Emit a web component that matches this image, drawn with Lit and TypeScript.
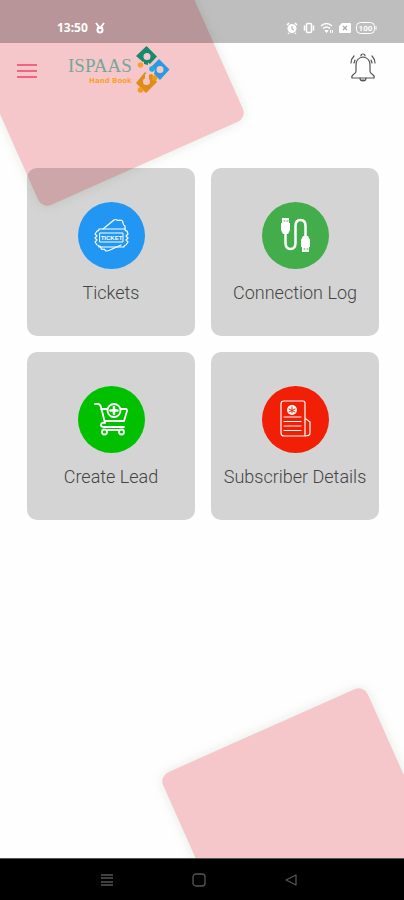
import { LitElement, html, css, svg } from "lit";
import { customElement, property } from "lit/decorators.js";

const icons: Record<string, unknown> = {
  ticket: svg`
    <path d="M12 14 23 5q2-1 3 0t3 0q3 0 3 3 0 2 2 3v3M8 31q2 0 2 2t3 1l2 2q2 0 4-1l11-5" />
    <path d="M8 14h26q0 2 2 2l1 3-2 2 2 2-2 2 2 2-2 3q-2 0-2 2H8q0-2-2-2l-2-3 2-2-2-2 2-2-2-2 2-3q2 0 2-2z" />
    <path d="M9 18h23v9H9z" stroke-width="1" />
    <text x="20.500" y="25" text-anchor="middle">TICKET</text>`,
  cable: svg`
    <path d="M10.500 17v11q0 6 5 6t5-6V11q0-6 5-6t5 6v10" stroke-width="2.500" />
    <path d="M7 3h7v5h1v7l-2 4H8l-2-4V8h1zM27 37h7v-5h1v-7l-2-4h-5l-2 4v7h1z" fill="#fff" stroke="none" />
    <path d="M9 6h1m2 0h1M29 34h1m2 0h1" stroke="#43ad4b" stroke-width="1" />`,
  cart: svg`
    <path d="M4 5h3q2 0 3 3l4 16q-4-1-4 2 0 2 3 2h20M10 10h6M30 10h5q1 0 1 2l-3 10H14" stroke-width="1.800" />
    <circle cx="23" cy="11.500" r="6.500" stroke-width="1.800" />
    <path d="M23 8v7m-3.500-3.500h7" stroke-width="2.500" />
    <circle cx="13.500" cy="33" r="2.500" stroke-width="1.800" /><circle cx="30.500" cy="33" r="2.500" stroke-width="1.800" />
    <path d="M17 31h10" stroke-width="2" />`,
  details: svg`
    <path d="M30 37H9q-3 0-3-3V5q0-3 3-3h19q2 0 2 2v33q5 0 5-3V23l-4-3" />
    <circle cx="17" cy="11" r="5" fill="#fff" stroke="none" />
    <path d="M17 8v6m-3-4 6 3m0-3-6 3" stroke="#f11f05" stroke-width="1" />
    <path d="M9 18h17M9 22.500h17M9 27h17M9 31.500h17" />`,
};

@customElement("menu-card")
class MenuCard extends LitElement {
  @property() icon = "";
  @property() label = "";

  static styles = css`
    :host { display: block; }
    .card {
      width: 100%;
      aspect-ratio: 1;
      box-sizing: border-box;
      border: 0;
      border-radius: 10px;
      padding: 2px 0 0;
      margin: 0;
      background: rgba(0, 0, 0, 0.165);
      display: flex;
      flex-direction: column;
      align-items: center;
      justify-content: center;
      gap: 12px;
      color: #444;
      font: 300 18px/24px Roboto, sans-serif;
      white-space: nowrap;
      cursor: pointer;
    }
    .disc {
      width: 67px;
      height: 67px;
      border-radius: 50%;
      display: grid;
      place-items: center;
    }
    .ticket { background: #2196f3; }
    .cable { background: #43ad4b; }
    .cart { background: #00c000; }
    .details { background: #f11f05; }
    svg {
      width: 40px;
      height: 40px;
      fill: none;
      stroke: #fff;
      stroke-width: 1.2;
      stroke-linejoin: round;
      stroke-linecap: round;
    }
    text {
      font: 700 6px "Liberation Sans", sans-serif;
      fill: #fff;
      stroke: none;
    }
  `;

  render() {
    return html`<button class="card">
      <span class="disc ${this.icon}">
        <svg viewBox="0 0 40 40" aria-hidden="true">${icons[this.icon]}</svg>
      </span>
      <span>${this.label}</span>
    </button>`;
  }
}

@customElement("app-root")
class AppRoot extends LitElement {
  static styles = css`
    :host {
      display: flex;
      flex-direction: column;
      position: relative;
      min-height: 100vh;
      overflow: hidden;
      background: #fefefe;
      font-family: Roboto, sans-serif;
    }
    .tile {
      position: absolute;
      width: 224px;
      height: 224px;
      border-radius: 10px;
      background: #f5c7cb;
      box-shadow: 0 0 12px rgba(80, 110, 60, 0.14);
      transform: rotate(-24deg);
    }
    .first { left: -13px; top: -51px; }
    .second { right: -15px; bottom: -45px; }
    .status, header, main, nav { position: relative; }
    .status {
      height: 43px;
      box-sizing: border-box;
      padding: 12px 27px 0 57px;
      display: flex;
      align-items: center;
      gap: 7px;
      background: rgba(0, 0, 0, 0.25);
      color: #fff;
      font: 700 12px/16px "Noto Sans", sans-serif;
    }
    .right { margin-left: auto; display: flex; gap: 5px; align-items: center; }
    svg { display: block; }
    header {
      height: 56px;
      box-sizing: border-box;
      padding: 0 28px 0 17px;
      display: flex;
      align-items: center;
    }
    button { border: 0; padding: 0; background: none; cursor: pointer; }
    .brand { display: flex; margin: 0 0 4px 31px; align-items: center; }
    .words { display: flex; flex-direction: column; align-items: flex-end; padding-top: 4px; }
    .name { font: 19px/20px "Liberation Serif", serif; color: #78a698; }
    .sub { font: 700 7px/10px "DejaVu Sans", sans-serif; color: #fba02e; white-space: nowrap; }
    .bell { margin: 0 0 8px auto; }
    main {
      flex: 1;
      padding: 69px 25px 24px 27px;
      display: grid;
      grid-template-columns: 1fr 1fr;
      gap: 16px;
      align-content: start;
    }
    nav {
      height: 42px;
      box-sizing: border-box;
      border-top: 1px solid #555;
      background: #000;
      display: flex;
      align-items: center;
      justify-content: center;
      gap: 76px;
      padding-right: 6px;
    }
  `;

  render() {
    return html`
      <div class="tile first"></div>
      <div class="tile second"></div>
      <div class="status">
        <span>13:50</span>
        <svg width="10" height="12" viewBox="0 0 10 12" fill="none" stroke="#fff" stroke-width="2">
          <path d="M1 1l3 4M9 1 6 5" /><circle cx="5" cy="8" r="2.500" /><path d="M2 6h6" />
        </svg>
        <span class="right">
          <svg width="12" height="12" viewBox="0 0 12 12">
            <circle cx="6" cy="6.500" r="4.500" fill="#fff" />
            <path d="M1 3l2-2M11 3 9 1M3 11l-1 1M9 11l1 1" stroke="#fff" stroke-width="1.500" />
            <path d="M6 4v3l2 1" stroke="#aaa" fill="none" />
          </svg>
          <svg width="12" height="12" viewBox="0 0 12 12" fill="none" stroke="#fff">
            <rect x="3.500" y="1.500" width="5" height="9" rx="1" stroke-width="1.500" />
            <path d="M1.500 3.500v5M10.500 3.500v5" stroke-width="1.500" />
          </svg>
          <svg width="14" height="12" viewBox="0 0 14 12" fill="none" stroke="#fff" stroke-width="1.600">
            <path d="M1 4q5.500-5 11 0M3 6.500q3.500-3 7 0" /><path d="M5 8.500h3l-1.500 2z" fill="#fff" stroke-width="1" />
            <path d="M10.500 8v3M12.500 8v3" stroke-width="1" />
          </svg>
          <svg width="12" height="12" viewBox="0 0 12 12">
            <path d="M3 1h8q1 0 1 1v8q0 1-1 1H1q-1 0-1-1V4z" fill="#fff" />
            <path d="M4 4l4 4M8 4 4 8" stroke="#aaa" stroke-width="1.300" />
          </svg>
          <svg width="21" height="12" viewBox="0 0 21 12">
            <rect x="0.500" y="0.500" width="18" height="11" rx="4" fill="none" stroke="#fff" />
            <path d="M20 4v4" stroke="#fff" />
            <text x="9.500" y="9" text-anchor="middle" font-family="Roboto, sans-serif" font-size="8" font-weight="700" fill="#fff">100</text>
          </svg>
        </span>
      </div>
      <header>
        <button aria-label="Menu">
          <svg width="20" height="16" viewBox="0 0 20 16" stroke="#f2637d" stroke-width="2">
            <path d="M0 2h20M0 8h20M0 14h20" />
          </svg>
        </button>
        <div class="brand">
          <div class="words"><span class="name">ISPAAS</span><span class="sub">Hand Book</span></div>
          <svg width="38" height="48" viewBox="1 0 38 48">
            <path d="M15.500 1 26 11.500 19 19l-4-3-3 1-7-6z" fill="#16896f" />
            <path d="M13 19v-4h4v5z" fill="#16896f" />
            <circle cx="16" cy="11.500" r="3.500" fill="#f5c7cb" />
            <path d="M28 14l10.500 10.500L29 35l-6-6 1-4-4-3z" fill="#2b9be0" />
            <circle cx="29" cy="24.500" r="3.500" fill="#f5c7cb" />
            <path d="M14 27l3 3 4-1 5 8-11 11-10-10z" fill="#e08c18" />
            <path d="M14 29v4l4 1v-6z" fill="#f5c7cb" />
            <circle cx="15.500" cy="36.500" r="3.500" fill="#f5c7cb" />
            <circle cx="9.500" cy="20" r="2.800" fill="#fba02e" />
            <circle cx="21" cy="24" r="2.800" fill="#24a9dd" />
            <circle cx="23.500" cy="33" r="2.800" fill="#f5991e" />
            <circle cx="9.500" cy="45" r="2.800" fill="#f5991e" />
          </svg>
        </div>
        <button class="bell" aria-label="Notifications">
          <svg width="26" height="29" viewBox="0 0 26 29" fill="none" stroke="#555" stroke-width="1.200" stroke-linecap="round">
            <path d="M13 4q7 1 7 8v6q0 2 2 3 3 2 2 4H2q-1-2 2-4 2-1 2-3v-6q0-7 7-8zM11 3q0-2 2-2t2 2" />
            <path d="M10 25q0 3 3 3t3-3M12 27h2" />
            <path d="M4 3Q1 6 1 10M22 3q3 3 3 7M5 7 4 10M21 7l1 3" />
          </svg>
        </button>
      </header>
      <main>
        <menu-card icon="ticket" label="Tickets"></menu-card>
        <menu-card icon="cable" label="Connection Log"></menu-card>
        <menu-card icon="cart" label="Create Lead"></menu-card>
        <menu-card icon="details" label="Subscriber Details"></menu-card>
      </main>
      <nav>
        <button aria-label="Recent apps">
          <svg width="16" height="14" viewBox="0 0 16 14" stroke="#555" stroke-width="1.300"><path d="M2 2h12M2 5h12M2 9h12M2 12h12" /></svg>
        </button>
        <button aria-label="Home">
          <svg width="16" height="14" viewBox="0 0 16 14" fill="none" stroke="#555" stroke-width="1.300"><rect x="2" y="1" width="12" height="12" rx="3" /></svg>
        </button>
        <button aria-label="Back">
          <svg width="16" height="14" viewBox="0 0 16 14" fill="none" stroke="#555" stroke-width="1.300" stroke-linejoin="round"><path d="M13 2v10L3 7z" /></svg>
        </button>
      </nav>
    `;
  }
}
